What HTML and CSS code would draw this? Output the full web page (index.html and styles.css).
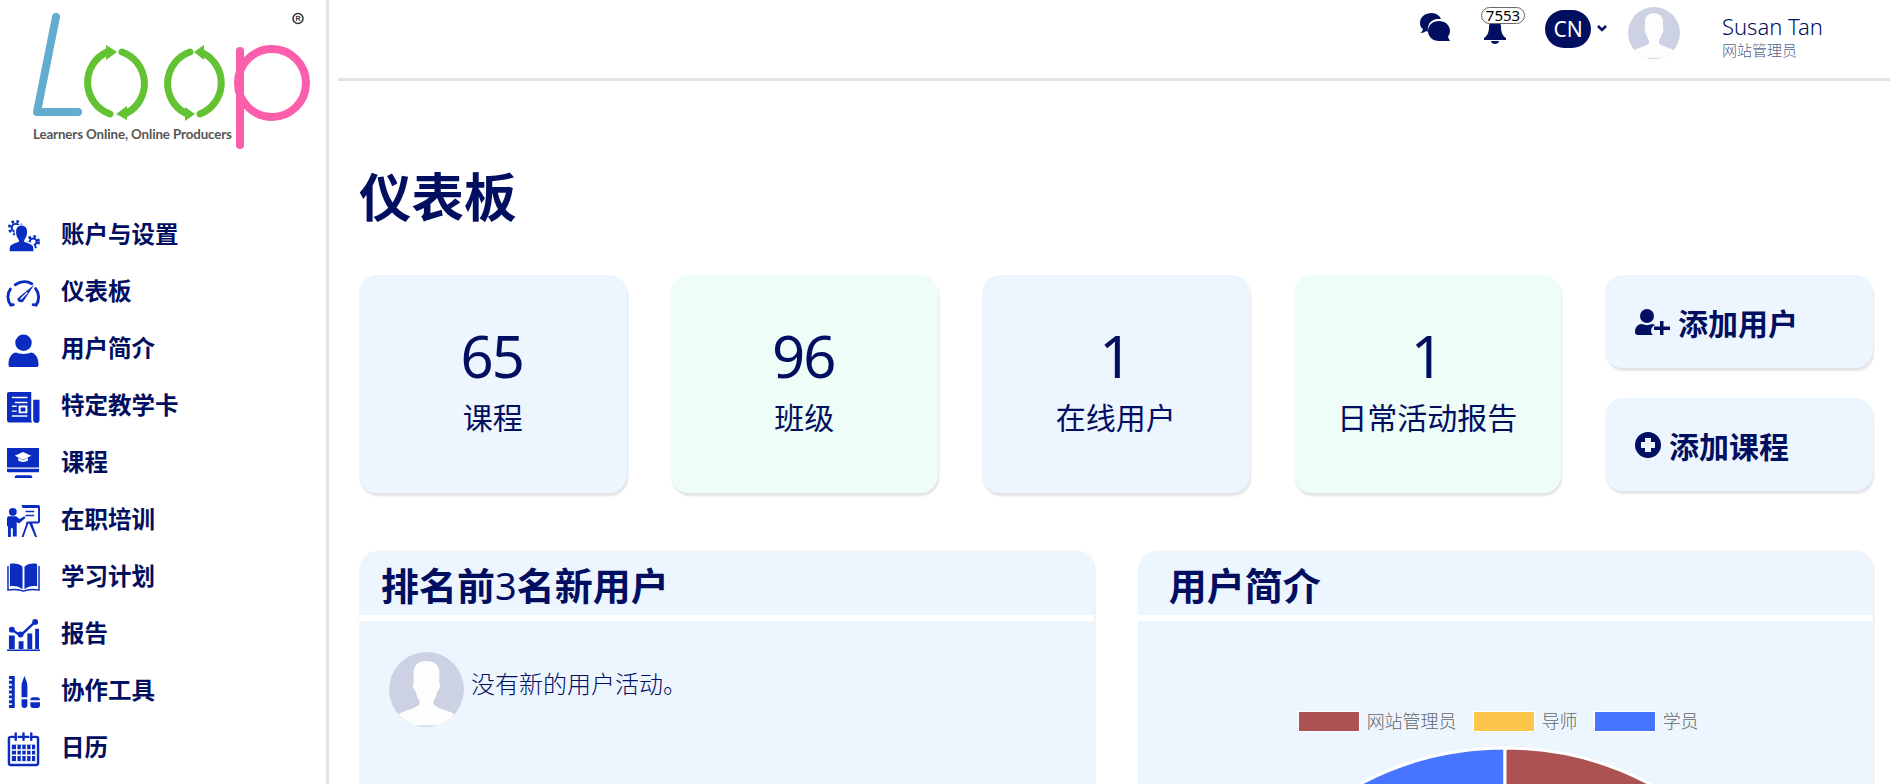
FILE: index.html
```html
<!DOCTYPE html>
<html lang="zh-CN">
<head>
  <meta charset="UTF-8" />
  <meta name="viewport" content="width=device-width, initial-scale=1.0" />
  <title>仪表板</title>
  <link rel="stylesheet" href="styles.css">
</head>
<body>
  <svg class="defs" width="0" height="0">
    <symbol id="avatar" viewBox="0 0 75 75">
      <clipPath id="avatarClip"><circle cx="37.5" cy="37.5" r="37.5" /></clipPath>
      <g clip-path="url(#avatarClip)">
        <rect width="75" height="75" fill="#ccd2e3" />
        <path d="M37.5 9c-9 0-13 5-13 13 0 3 0 6 .5 9-1 0-1.500 1-1 3 .5 3 1.500 5 2.500 5 1 5 3 8 4 10v3c-1 3-9 5-19 9-2 1-2 3 1 6 6 5 14 8 25 8s19-3 25-8c3-3 3-5 1-6-10-4-18-6-19-9v-3c1-2 3-5 4-10 1 0 2-2 2.500-5 .5-2 0-3-1-3 .5-3 .5-6 .5-9 0-8-4-13-13-13z" fill="#fdfdfe" />
        <rect y="73.500" width="75" height="2" fill="#ccd2e3" />
      </g>
    </symbol>
  </svg>

  <!-- Menu lateral -->
  <aside class="sidebar">
    <svg class="logo" viewBox="0 0 326 170" width="326" height="170">
      <path class="logo-l" d="M56 17 37 112H78" />
      <g class="logo-o">
        <path d="M110 114A33.500 33.500 0 0 1 107 52" />
        <path d="M122 52A33.500 33.500 0 0 1 127 113" />
        <path d="M190 52A33.500 33.500 0 0 0 185 113" />
        <path d="M200 114A33.500 33.500 0 0 0 203 53" />
      </g>
      <g class="logo-arrow">
        <path d="M106 45 117 52 106 60z" />
        <path d="M127 106 116 114 127 120z" />
        <path d="M185 107 195 114 185 121z" />
        <path d="M204 45 194 52 204 60z" />
      </g>
      <circle class="logo-p" cx="272" cy="83" r="34" />
      <path class="logo-p" d="M240 51V145" />
      <circle class="logo-r" cx="298" cy="18.500" r="5" />
      <text class="logo-r-text" x="298" y="21" text-anchor="middle">R</text>
      <text class="logo-tag" x="33" y="139">Learners Online, Online Producers</text>
    </svg>

    <nav class="menu">
      <a class="menu-item">
        <svg viewBox="0 0 34 34">
          <circle class="gear-teeth" cx="9" cy="8" r="6.500" />
          <circle class="gear-ring" cx="9" cy="8" r="4" />
          <circle class="gear-teeth" cx="27" cy="22.500" r="5.500" />
          <circle class="gear-ring" cx="27" cy="22.500" r="3.500" />
          <path class="person" d="M15 5c4 0 6.500 3 6.500 7.500 0 3-1 6-3 8.500v1c3 1 8 2 9 5 .5 2 .5 4 .5 6H2c0-2 0-4 .5-6 1-3 6-4 9-5v-1c-2-2.500-3-5.500-3-8.500C8.500 8 11 5 15 5z" />
        </svg>
        <span>账户与设置</span>
      </a>
      <a class="menu-item">
        <svg viewBox="0 0 34 34"><path class="line thick" d="M4 29C0 24 0 17 3.500 12.500M8.500 8c6-4 12-4 17-1M29.500 12c4 5 4 12 .5 17M4 29l2.500-.5M30 29l-3-.5" /><path d="M28 8 17 25c-2 2.500-7.500.5-6-3z" /><path class="grid" d="M14 23l7-7" /></svg>
        <span>仪表板</span>
      </a>
      <a class="menu-item">
        <svg viewBox="0 0 34 34"><circle cx="17" cy="9" r="8.500" /><path d="M3 34c-1 0-1.500-1-1.500-3 0-7 4-12 8-12 4 2 11 2 15 0 4 0 8 5 8 12 0 2-.5 3-1.500 3z" /></svg>
        <span>用户简介</span>
      </a>
      <a class="menu-item">
        <svg viewBox="0 0 34 34"><path fill-rule="evenodd" d="M2 1h23v28c0 2 .5 3 1.500 3.500H3c-2 0-3-1-3-3V3c0-1 1-2 2-2zm3 5v1.500h16V6zm3 5v1.500h13V11zm-3 4v1.500h5V15zm7 0v8h9v-8zm2 2h5v4h-5zM5 20v1.500h5V20zm0 5v1.500h16V25z" /><path d="M27 9h6.500v21c0 2-1 3-3 3-2 0-3.500-1-3.500-3z" /></svg>
        <span>特定教学卡</span>
      </a>
      <a class="menu-item">
        <svg viewBox="0 0 34 34"><path fill-rule="evenodd" d="M0 0h33v20H0zm16.500 4L8 8l8.500 4L25 8zm-5 6v3c3 2 7 2 10 0v-3l-5 2.500z" /><path d="M0 21.500h33V24c0 .5-.5 1-1 1H1c-.5 0-1-.5-1-1z" /><path d="M8 30c0-1 1-2 2-2h14c1 0 2 1 2 2v1H8z" /></svg>
        <span>课程</span>
      </a>
      <a class="menu-item">
        <svg viewBox="0 0 34 34"><circle cx="6" cy="7" r="4" /><path d="M0 14c0-2 1-2.500 3-2.500h5c2 0 3 1 5 3l5-3 1 2-6 5c-1 .5-2 0-3-1v15H6V24H4v9H1V22H0z" /><path fill-rule="evenodd" d="M15 0h17c1 0 2 1 2 2v15c0 1-1 2-2 2h-6l5 14h-2l-6-14h-1l-5 14h-2l5-14h-1l2-2h11V3H16z" /><path d="M19 6h9v1.500h-9zM19 10h9v1.500h-9z" /></svg>
        <span>在职培训</span>
      </a>
      <a class="menu-item">
        <svg viewBox="0 0 34 34"><path d="M3 2c5-1 10 0 13 3v23c-4-3-8-4-13-3zM31 2c-5-1-10 0-13 3v23c4-3 8-4 13-3z" /><path class="line thin" d="M1 4v25c6-1 11-1 16 1 5-2 10-2 16-1V4" /></svg>
        <span>学习计划</span>
      </a>
      <a class="menu-item">
        <svg viewBox="0 0 34 34"><path d="M2 17h6v14H2zM12 23h5v8h-5zM21 15h5v16h-5zM29 10h4v21h-4zM0 31.500h34V33H0z" /><path class="line" d="M5 11l9 6L29 3" /><circle cx="5" cy="11" r="3" /><circle cx="14" cy="16" r="3" /><circle cx="29" cy="3" r="3" /></svg>
        <span>报告</span>
      </a>
      <a class="menu-item">
        <svg viewBox="0 0 34 34"><path d="M2 0h6v33H2v-3h3v-2H2v-3h3v-2H2v-3h3v-2H2v-3h3v-2H2V10h3V8H2V5h3V3H2z" /><path d="M15 10c0-3 2-7 3-10 1 3 3 7 3 10v12h-6zM15 24h6v6c0 2-1 3-3 3s-3-1-3-3zM24 27h10v3c0 2-1 3-3 3h-4c-2 0-3-1-3-3zM24 25c0-2 1-3 3-3h4c2 0 3 1 3 3z" /></svg>
        <span>协作工具</span>
      </a>
      <a class="menu-item">
        <svg viewBox="0 0 34 34"><path class="line" d="M7 4H4C3 4 2 5 2 6v25c0 1 1 2 2 2h26c1 0 2-1 2-2V6c0-1-1-2-2-2h-3M12 4h3M19 4h3M9 .5V7M17 .5V7M25 .5V7" /><path d="M5 12h24v17H5z" /><path class="grid" d="M5 17.500h24M5 23h24M10 12v17M15 12v17M20 12v17M25 12v17" /></svg>
        <span>日历</span>
      </a>
    </nav>
  </aside>

  <div class="content">
    <!-- Barra superior -->
    <header class="topbar">
      <svg class="chat-icon" viewBox="0 0 30 28"><path d="M12 0C5 0 0 4 0 10c0 3 1 5 3 6-.5 2-1 3-3 4 3 0 5-1 6-2 1 .5 1 .5 2 .5C7 12 10 7 17 6c2 0 4 0 4 0-1-3-5-6-9-6z" /><path d="M19 8c-6 0-11 4-11 10s5 10 11 10h11l-2-4c1-2 2-4 2-6 0-6-5-10-11-10z" /></svg>
      <div class="bell">
        <svg viewBox="0 0 24 26"><path d="M12 2c4 0 6 3 6 7 0 6 2 9 5 11v2H1v-2c3-2 5-5 5-11 0-4 2-7 6-7z" /><path d="M8 23h8c0 2-2 3-4 3s-4-1-4-3z" /></svg>
        <span class="badge">7553</span>
      </div>
      <div class="lang">
        <span class="lang-pill">CN</span>
        <svg class="chevron" viewBox="0 0 10 7"><path d="M1 1l4 4 4-4" /></svg>
      </div>
      <svg class="top-avatar"><use href="#avatar" /></svg>
      <div class="user-info">
        <div class="user-name">Susan Tan</div>
        <div class="user-role">网站管理员</div>
      </div>
    </header>

    <main class="main">
      <h1 class="page-title">仪表板</h1>

      <section class="stats">
        <div class="stat">
          <div class="stat-num">65</div>
          <div class="stat-label">课程</div>
        </div>
        <div class="stat green">
          <div class="stat-num">96</div>
          <div class="stat-label">班级</div>
        </div>
        <div class="stat">
          <div class="stat-num">1</div>
          <div class="stat-label">在线用户</div>
        </div>
        <div class="stat green">
          <div class="stat-num">1</div>
          <div class="stat-label">日常活动报告</div>
        </div>
        <div class="actions">
          <a class="action">
            <svg class="icon-user-plus" viewBox="0 0 35 26"><circle cx="12" cy="7" r="7" /><path d="M3 26c-2 0-3-1-3-3 0-5 3-8 7-8 3 1.500 7 1.500 10 0 1 0 2 .5 3 1-2 1-4 3-4 6 0 2 1 3 2 4z" /><path d="M25 12h3.500v5.500H35V21h-6.500v5H25v-5h-6v-3.500h6z" /></svg>
            添加用户
          </a>
          <a class="action">
            <svg class="icon-plus" viewBox="0 0 26 26"><path fill-rule="evenodd" d="M13 0a13 13 0 1 1 0 26 13 13 0 0 1 0-26zm-3 6v4H6v6h4v4h6v-4h4v-6h-4V6z" /></svg>
            添加课程
          </a>
        </div>
      </section>

      <section class="panels">
        <div class="panel">
          <h2 class="panel-head">排名前<span class="light">3</span>名新用户</h2>
          <div class="panel-body new-users">
            <svg class="row-avatar"><use href="#avatar" /></svg>
            <p>没有新的用户活动。</p>
          </div>
        </div>
        <div class="panel">
          <h2 class="panel-head second">用户简介</h2>
          <div class="panel-body chart">
            <ul class="legend">
              <li><i class="swatch red"></i>网站管理员</li>
              <li><i class="swatch yellow"></i>导师</li>
              <li><i class="swatch blue"></i>学员</li>
            </ul>
            <svg class="pie" viewBox="0 0 620 620" width="620" height="620">
              <path class="slice-blue" d="M310 310 60 493A310 310 0 0 1 310 0z" />
              <path class="slice-red" d="M310 310V0A310 310 0 0 1 560 493z" />
              <path class="slice-yellow" d="M310 310 560 493A310 310 0 0 1 60 493z" />
            </svg>
          </div>
        </div>
      </section>
    </main>
  </div>
</body>
</html>
```

FILE: styles.css
```css
/* Reset básico */
* {
  box-sizing: border-box;
  margin: 0;
  padding: 0;
}

html, body {
  height: 784px;
  overflow: hidden;
}

body {
  display: flex;
  background: #fff;
  color: #020f60;
  font-family: "Noto Sans", "Noto Sans CJK SC", sans-serif;
}

.defs {
  position: absolute;
}

/* Menu lateral */
.sidebar {
  flex: 0 0 329px;
  border-right: 3px solid #e3e3e3;
}

.logo {
  display: block;
}

.logo-l {
  fill: none;
  stroke: #63add0;
  stroke-width: 8;
  stroke-linecap: round;
  stroke-linejoin: round;
}

.logo-o path {
  fill: none;
  stroke: #63c232;
  stroke-width: 7;
  stroke-linecap: round;
}

.logo-arrow path {
  fill: #63c232;
}

.logo-p {
  fill: none;
  stroke: #fb5eab;
  stroke-width: 8;
  stroke-linecap: round;
}

.logo-r {
  fill: none;
  stroke: #333;
  stroke-width: 1.5;
}

.logo-r-text {
  font: bold 7px "Liberation Sans", sans-serif;
  fill: #333;
}

.logo-tag {
  font: bold 13.3px "Lato", sans-serif;
  fill: #555;
  letter-spacing: -0.1px;
}

.menu {
  margin-top: 36px;
}

.menu-item {
  display: flex;
  align-items: center;
  height: 57px;
  padding-left: 7px;
  gap: 21px;
  font-size: 23.500px;
  font-weight: 700;
  line-height: 1;
}

.menu-item svg {
  flex: 0 0 33px;
  width: 33px;
  height: 33px;
  margin-top: 4px;
  fill: #0a2cc0;
  overflow: visible;
}

.menu-item .line {
  fill: none;
  stroke: #0a2cc0;
  stroke-width: 2.500;
  stroke-linecap: round;
}

.menu-item .line.thick {
  stroke-width: 3;
}

.menu-item .line.thin {
  stroke-width: 1.500;
  stroke-linecap: butt;
}

.menu-item .grid {
  fill: none;
  stroke: #fff;
  stroke-width: 1.500;
}

.menu-item .gear-teeth {
  fill: none;
  stroke: #0a2cc0;
  stroke-width: 3;
  stroke-dasharray: 2.500 2.600;
}

.menu-item .gear-ring {
  fill: none;
  stroke: #0a2cc0;
  stroke-width: 2;
}

.menu-item .person {
  stroke: #fff;
  stroke-width: 1.500;
}

/* Barra superior */
.content {
  flex: 1;
  min-width: 0;
}

.topbar {
  display: flex;
  align-items: flex-start;
  height: 81px;
  margin-left: 9px;
  border-bottom: 3px solid #e3e3e3;
  padding-left: 1082px;
  fill: #020f60;
}

.chat-icon {
  width: 30px;
  height: 28px;
  margin-top: 13px;
}

.bell {
  position: relative;
  width: 24px;
  height: 26px;
  margin: 18px 0 0 33px;
}

.bell svg {
  width: 24px;
  height: 26px;
  display: block;
}

.badge {
  position: absolute;
  top: -11px;
  left: -2px;
  width: 44px;
  height: 17px;
  border: 1px solid #666;
  border-radius: 9px;
  background: #fff;
  color: #000;
  font-size: 15px;
  line-height: 15px;
  text-align: center;
}

.lang {
  display: flex;
  align-items: center;
  margin: 10px 0 0 38px;
}

.lang-pill {
  width: 46px;
  height: 38px;
  border-radius: 19px;
  background: #020f60;
  color: #fff;
  font-size: 21px;
  line-height: 38px;
  text-align: center;
}

.chevron {
  width: 10px;
  height: 7px;
  margin: -2px 0 0 6px;
  fill: none;
  stroke: #020f60;
  stroke-width: 2.500;
}

.top-avatar {
  width: 52px;
  height: 52px;
  margin: 7px 0 0 21px;
}

.user-info {
  margin: 12px 0 0 42px;
}

.user-name {
  font-size: 22px;
  font-weight: 300;
  line-height: 28px;
}

.user-role {
  font-size: 15px;
  font-weight: 300;
  line-height: 20px;
  color: #52628a;
}

/* Conteúdo principal */
.main {
  padding: 0 17.500px 0 30px;
}

.page-title {
  height: 194px;
  padding-top: 80px;
  font-size: 52.500px;
  font-weight: 700;
  line-height: 72px;
}

.stats {
  display: grid;
  grid-template-columns: repeat(5, 1fr);
  column-gap: 44px;
  height: 218px;
}

.stat {
  display: flex;
  flex-direction: column;
  align-items: center;
  padding-top: 45px;
  background: #edf5ff;
  border-radius: 18px;
  box-shadow: 1px 3px 2px #e2e4e8;
}

.stat.green {
  background: #eefdf8;
}

.stat-num {
  margin-right: 2px;
  font-size: 58px;
  font-weight: 400;
  letter-spacing: -2px;
  line-height: 72px;
}

.stat-label {
  font-size: 30px;
  font-weight: 400;
  line-height: 44px;
  margin-top: 4px;
}

.actions {
  display: flex;
  flex-direction: column;
  gap: 30px;
}

.action {
  display: flex;
  align-items: center;
  height: 93px;
  padding-left: 30px;
  gap: 8px;
  background: #edf5ff;
  border-radius: 18px;
  box-shadow: 1px 3px 2px #e2e4e8;
  font-size: 30px;
  font-weight: 700;
  fill: #020f60;
}

.icon-user-plus {
  width: 35px;
  height: 26px;
}

.icon-plus {
  width: 26px;
  height: 26px;
}

/* Painéis */
.panels {
  display: grid;
  grid-template-columns: 1fr 1fr;
  column-gap: 44px;
  margin-top: 58px;
}

.panel {
  box-shadow: 1px 0 2px #e2e4e8;
  border-radius: 20px 20px 0 0;
}

.panel-head {
  height: 64px;
  padding-left: 22px;
  background: #edf5ff;
  border-radius: 20px 20px 0 0;
  font-size: 38px;
  font-weight: 700;
  line-height: 68px;
  overflow: hidden;
}

.panel-head.second {
  padding-left: 31px;
}

.light {
  font-weight: 400;
}

.panel-body {
  margin-top: 6px;
  height: 800px;
  background: #edf5ff;
}

.new-users {
  display: flex;
  align-items: flex-start;
  padding: 31px 0 0 30px;
}

.row-avatar {
  width: 75px;
  height: 75px;
}

.new-users p {
  margin: 10px 0 0 7px;
  font-size: 24px;
  font-weight: 300;
  line-height: 44px;
}

.chart {
  display: flex;
  flex-direction: column;
  align-items: center;
  padding-top: 90px;
}

.legend {
  display: flex;
  gap: 16px;
  margin-right: 14px;
  list-style: none;
  font-size: 18px;
  font-weight: 300;
  line-height: 21px;
  color: #666;
}

.legend li {
  display: flex;
  align-items: center;
  gap: 7px;
}

.swatch {
  width: 62px;
  height: 21px;
  border: 1px solid #fff;
}

.swatch.red { background: #ac5252; }
.swatch.yellow { background: #fcc64c; }
.swatch.blue { background: #4875ff; }

.pie {
  flex: none;
  margin-top: 16px;
  overflow: visible;
}

.pie path {
  stroke: #fff;
  stroke-width: 3;
}

.slice-blue { fill: #4875ff; }
.slice-red { fill: #ac5252; }
.slice-yellow { fill: #fcc64c; }
```
